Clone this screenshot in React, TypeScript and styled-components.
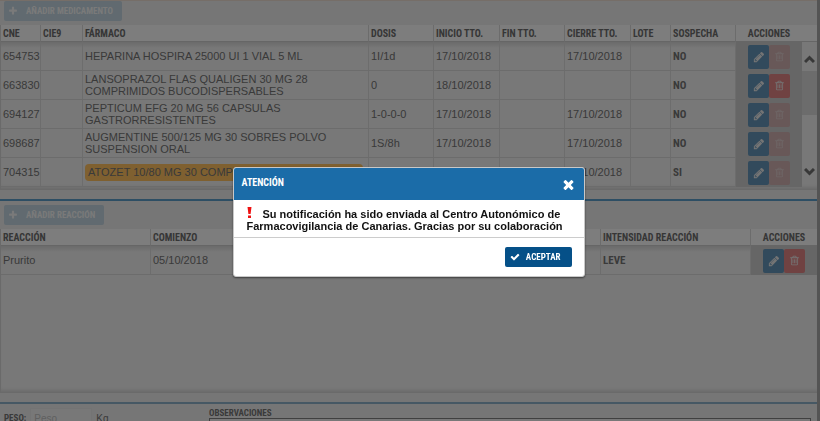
import React from "react";
import styled, { createGlobalStyle, css } from "styled-components";

const condensed = '"Roboto Condensed", "Liberation Sans Narrow", Roboto, sans-serif';
const sans = '"Liberation Sans", Arial, sans-serif';

const GlobalStyle = createGlobalStyle`
  *, *::before, *::after { box-sizing: border-box; }
  body {
    margin: 0;
    overflow: hidden;
    background: #ececec;
    font-family: ${sans};
    font-size: 11px;
    color: #747474;
  }
  button, input, textarea { font: inherit; margin: 0; }
`;

const Page = styled.div`
  display: flex;
  flex-direction: column;
  height: 100vh;
  overflow: hidden;
  border-right: 3px solid #a8a8a8;
  background: #ececec;
`;

const Panel = styled.section<{ $first?: boolean }>`
  flex: none;
  display: flex;
  flex-direction: column;
  padding-bottom: 9px;
  border-top: ${(p) => (p.$first ? "1px solid #ecdcd0" : "2px solid #5a9cc8")};
`;

const Toolbar = styled.div`
  display: flex;
  padding: 0 4px 4px;
`;

const ReactionToolbar = styled(Toolbar)`
  padding-top: 4px;
`;

const Svg = styled.svg<{ $size: number }>`
  display: block;
  flex: none;
  width: ${(p) => p.$size}px;
  height: ${(p) => p.$size}px;
  fill: currentColor;
`;

const AddButton = styled.button`
  display: flex;
  align-items: center;
  gap: 8px;
  height: 20px;
  padding: 0 9px 0 4px;
  border: 0;
  border-radius: 2px;
  background: #c2d4e0;
  color: #f4f4f4;
  font: bold 9px/20px ${condensed};
  white-space: nowrap;
`;

const TableArea = styled.div<{ $height: number }>`
  display: flex;
  align-items: flex-start;
  min-height: ${(p) => p.$height}px;
  border-left: 1px solid #d4d4d4;
  background: #f0f0f0;
  box-shadow: inset 0 -5px 4px -3px #cccccc;
`;

const Grid = styled.table`
  flex: 1;
  width: 100%;
  min-width: 0;
  table-layout: fixed;
  border-collapse: separate;
  border-spacing: 0;
`;

const Col = styled.col<{ $w?: string }>`
  width: ${(p) => p.$w ?? "auto"};
`;

const Th = styled.th<{ $center?: boolean }>`
  height: 17px;
  padding: 2px 2px 0;
  border-right: 1px solid #d8d8d8;
  border-bottom: 1px solid #cccccc;
  background: #fafafa;
  color: #6c6c6c;
  font: bold 10px/14px ${condensed};
  text-align: ${(p) => (p.$center ? "center" : "left")};
  white-space: nowrap;
  &:last-child { border-right: 0; }
`;

const Td = styled.td<{ $strong?: boolean }>`
  height: 29px;
  padding: 0 2px;
  border-right: 1px solid #dadada;
  border-bottom: 1px solid #d8d8d8;
  line-height: 12px;
  vertical-align: middle;
  tr:first-child > & {
    background: linear-gradient(#d6d6d6, #f0f0f0 6px);
  }
  ${(p) => p.$strong && css`
    padding-top: 2px;
    font: bold 11px/12px ${condensed};
  `}
`;

const ActionCell = styled(Td)`
  border: 0;
  &&& { background: #cccccc; }
`;

const Actions = styled.div`
  display: flex;
  justify-content: center;
`;

const IconButton = styled.button<{ $danger?: boolean }>`
  display: grid;
  place-items: center;
  width: 21px;
  height: 24px;
  padding: 0;
  border: 0;
  border-radius: 2px;
  background: ${(p) => (p.$danger ? "#e08484" : "#6494b8")};
  color: #e8e8e8;
  &:disabled { background: #d0b0b0; color: #dccccc; }
`;

const Mark = styled.span`
  display: block;
  margin-right: 3px;
  padding: 0 3px;
  overflow: hidden;
  border-radius: 4px;
  background: #ffc060;
  line-height: 17px;
  white-space: nowrap;
`;

const ScrollColumn = styled.div`
  flex: none;
  align-self: stretch;
  display: flex;
  flex-direction: column;
  width: 15px;
`;

const ScrollHead = styled.div`
  height: 17px;
  border-bottom: 1px solid #cccccc;
  background: #fafafa;
`;

const ScrollButton = styled.button<{ $down?: boolean }>`
  display: grid;
  place-items: center;
  height: 29px;
  padding: ${(p) => (p.$down ? "0 0 6px" : "6px 0 0")};
  border: 0;
  background: none;
  color: #707070;
`;

const ScrollTrack = styled.div`
  flex: 1;
`;

const ScrollThumb = styled.div`
  height: 44px;
  background: #d8d8d8;
`;

const Chevron = styled.svg`
  display: block;
  width: 11px;
  height: 9px;
  fill: none;
  stroke: currentColor;
  stroke-width: 3;
`;

const Form = styled.form`
  display: grid;
  grid-template-columns: 205px 1fr;
  padding: 4px 6px 0 4px;
  border-top: 2px solid #8cb0c8;
`;

const Weight = styled.div`
  display: flex;
  align-items: center;
  height: 20px;
  gap: 4px;
`;

const Label = styled.label`
  font: bold 9px/10px ${condensed};
`;

const WeightInput = styled.input`
  width: 62px;
  height: 20px;
  padding: 0 3px;
  border: 1px solid #e8e8e8;
  background: #f0f0f0;
  font-size: 10px;
  &::placeholder { color: #c0c0c0; opacity: 1; }
`;

const Unit = styled.span`
  font-size: 10px;
`;

const Notes = styled.div`
  display: flex;
  flex-direction: column;
`;

const NotesInput = styled.textarea`
  height: 60px;
  border: 1px solid #808080;
  background: #f0f0f0;
  resize: none;
`;

const Backdrop = styled.div`
  position: fixed;
  inset: 0;
  display: flex;
  align-items: flex-start;
  justify-content: center;
  padding: 167px 3px 0 0;
  background: rgba(0, 0, 0, 0.5);
`;

const Dialog = styled.div`
  width: 352px;
  border: 1px solid #c8c8c8;
  border-radius: 3px;
  overflow: hidden;
  background: #ffffff;
  box-shadow: 0 1px 2px rgba(0, 0, 0, 0.5);
  color: #111111;
`;

const DialogHeader = styled.header`
  display: flex;
  align-items: center;
  justify-content: space-between;
  height: 32px;
  padding: 0 8px;
  background: #1b6ca8;
  color: #ffffff;
`;

const DialogTitle = styled.h2`
  margin: 0;
  padding-bottom: 3px;
  font: bold 10px/12px ${condensed};
`;

const CloseButton = styled.button`
  display: grid;
  place-items: center;
  padding: 1px 0 0;
  border: 0;
  background: none;
  color: #ffffff;
`;

const Message = styled.p`
  margin: 0;
  padding: 7px 13px 5px;
  border-bottom: 1px solid #cccccc;
  font: bold 11px/12px ${sans};
`;

const Alert = styled.svg`
  width: 5px;
  height: 11px;
  margin-right: 11px;
  vertical-align: baseline;
  fill: #ee1111;
`;

const DialogFooter = styled.footer`
  display: flex;
  justify-content: flex-end;
  padding: 9px 12px 9px;
`;

const AcceptButton = styled.button`
  display: flex;
  align-items: center;
  gap: 6px;
  height: 20px;
  padding: 0 11px 0 5px;
  border: 0;
  border-radius: 2px;
  background: #055088;
  color: #ffffff;
  font: bold 9px/20px ${condensed};
`;

const paths = {
  plus: "M1600 736v192q0 40-28 68t-68 28h-416v416q0 40-28 68t-68 28h-192q-40 0-68-28t-28-68v-416h-416q-40 0-68-28t-28-68v-192q0-40 28-68t68-28h416v-416q0-40 28-68t68-28h192q40 0 68 28t28 68v416h416q40 0 68 28t28 68z",
  check: "M1671 566q0 40-28 68l-724 724-136 136q-28 28-68 28t-68-28l-136-136-362-362q-28-28-28-68t28-68l136-136q28-28 68-28t68 28l294 295 656-657q28-28 68-28t68 28l136 136q28 28 28 68z",
  times: "M1490 1322q0 40-28 68l-136 136q-28 28-68 28t-68-28l-294-294-294 294q-28 28-68 28t-68-28l-136-136q-28-28-28-68t28-68l294-294-294-294q-28-28-28-68t28-68l136-136q28-28 68-28t68 28l294 294 294-294q28-28 68-28t68 28l136 136q28 28 28 68t-28 68l-294 294 294 294q28 28 28 68z",
  pencil: "M491 1536l91-91-235-235-91 91v107h128v128h107zm523-928q0-22-22-22-10 0-17 7l-542 542q-7 7-7 17 0 22 22 22 10 0 17-7l542-542q7-7 7-17zm-54-192l416 416-832 832h-416v-416zm683 96q0 53-37 90l-166 166-416-416 166-165q36-38 90-38 53 0 91 38l235 234q37 39 37 91z",
  trash: "M704 736v576q0 14-9 23t-23 9h-64q-14 0-23-9t-9-23v-576q0-14 9-23t23-9h64q14 0 23 9t9 23zm256 0v576q0 14-9 23t-23 9h-64q-14 0-23-9t-9-23v-576q0-14 9-23t23-9h64q14 0 23 9t9 23zm256 0v576q0 14-9 23t-23 9h-64q-14 0-23-9t-9-23v-576q0-14 9-23t23-9h64q14 0 23 9t9 23zm128 724v-948h-896v948q0 22 7 40.5t14.5 27 10.5 8.5h832q3 0 10.5-8.5t14.5-27 7-40.5zm-672-1076h448l-48-117q-7-9-17-11h-317q-10 2-17 11zm928 32v64q0 14-9 23t-23 9h-96v948q0 83-47 143.5t-113 60.5h-832q-66 0-113-58.5t-47-141.5v-952h-96q-14 0-23-9t-9-23v-64q0-14 9-23t23-9h309l70-167q15-37 54-63t79-26h320q40 0 79 26t54 63l70 167h309q14 0 23 9t9 23z",
};

function Icon({ name, size }: { name: keyof typeof paths; size: number }) {
  return (
    <Svg $size={size} viewBox="0 0 1792 1792" aria-hidden="true">
      <path d={paths[name]} />
    </Svg>
  );
}

function RowActions({ removable }: { removable: boolean }) {
  return (
    <Actions>
      <IconButton type="button" aria-label="Editar">
        <Icon name="pencil" size={12} />
      </IconButton>
      <IconButton type="button" aria-label="Eliminar" $danger disabled={!removable}>
        <Icon name="trash" size={11} />
      </IconButton>
    </Actions>
  );
}

interface Drug {
  cne: string;
  name: string;
  dose: string;
  start: string;
  close: string;
  suspect: boolean;
  removable?: boolean;
}

const drugs: Drug[] = [
  { cne: "654753", name: "HEPARINA HOSPIRA 25000 UI 1 VIAL 5 ML", dose: "1I/1d", start: "17/10/2018", close: "17/10/2018", suspect: false },
  { cne: "663830", name: "LANSOPRAZOL FLAS QUALIGEN 30 MG 28 COMPRIMIDOS BUCODISPERSABLES", dose: "0", start: "18/10/2018", close: "", suspect: false, removable: true },
  { cne: "694127", name: "PEPTICUM EFG 20 MG 56 CAPSULAS GASTRORRESISTENTES", dose: "1-0-0-0", start: "17/10/2018", close: "17/10/2018", suspect: false },
  { cne: "698687", name: "AUGMENTINE 500/125 MG 30 SOBRES POLVO SUSPENSION ORAL", dose: "1S/8h", start: "17/10/2018", close: "17/10/2018", suspect: false },
  { cne: "704315", name: "ATOZET 10/80 MG 30 COMPRIMIDOS", dose: "", start: "", close: "17/10/2018", suspect: true },
];

const drugColumns: [string, string?][] = [
  ["CNE", "40px"],
  ["CIE9", "42px"],
  ["FÁRMACO"],
  ["DOSIS", "65px"],
  ["INICIO TTO.", "66px"],
  ["FIN TTO.", "65px"],
  ["CIERRE TTO.", "66px"],
  ["LOTE", "40px"],
  ["SOSPECHA", "65px"],
  ["ACCIONES", "66px"],
];

export default function App() {
  const [open, setOpen] = React.useState(true);
  return (
    <>
      <GlobalStyle />
      <Page>
        <Panel $first>
          <Toolbar>
            <AddButton type="button">
              <Icon name="plus" size={10} />
              AÑADIR MEDICAMENTO
            </AddButton>
          </Toolbar>
          <TableArea $height={165}>
            <Grid>
              <colgroup>
                {drugColumns.map(([title, width]) => <Col key={title} $w={width} />)}
              </colgroup>
              <thead>
                <tr>
                  {drugColumns.map(([title]) => (
                    <Th key={title} $center={title === "ACCIONES"}>{title}</Th>
                  ))}
                </tr>
              </thead>
              <tbody>
                {drugs.map((d) => (
                  <tr key={d.cne}>
                    <Td>{d.cne}</Td>
                    <Td />
                    <Td>{d.suspect ? <Mark>{d.name}</Mark> : d.name}</Td>
                    <Td>{d.dose}</Td>
                    <Td>{d.start}</Td>
                    <Td />
                    <Td>{d.close}</Td>
                    <Td />
                    <Td $strong>{d.suspect ? "SI" : "NO"}</Td>
                    <ActionCell><RowActions removable={!!d.removable} /></ActionCell>
                  </tr>
                ))}
              </tbody>
            </Grid>
            <ScrollColumn>
              <ScrollHead />
              <ScrollButton type="button" aria-label="Subir">
                <Chevron viewBox="0 0 11 9"><path d="M1 7l4.500-4.500L10 7" /></Chevron>
              </ScrollButton>
              <ScrollTrack><ScrollThumb /></ScrollTrack>
              <ScrollButton type="button" aria-label="Bajar" $down>
                <Chevron viewBox="0 0 11 9"><path d="M1 1l4.500 4.500L10 1" /></Chevron>
              </ScrollButton>
            </ScrollColumn>
          </TableArea>
        </Panel>

        <Panel>
          <ReactionToolbar>
            <AddButton type="button">
              <Icon name="plus" size={10} />
              AÑADIR REACCIÓN
            </AddButton>
          </ReactionToolbar>
          <TableArea $height={164}>
            <Grid>
              <colgroup>
                <Col $w="150px" />
                <Col $w="150px" />
                <Col />
                <Col $w="150px" />
                <Col $w="66px" />
              </colgroup>
              <thead>
                <tr>
                  <Th>REACCIÓN</Th>
                  <Th>COMIENZO</Th>
                  <Th />
                  <Th>INTENSIDAD REACCIÓN</Th>
                  <Th $center>ACCIONES</Th>
                </tr>
              </thead>
              <tbody>
                <tr>
                  <Td>Prurito</Td>
                  <Td>05/10/2018</Td>
                  <Td />
                  <Td $strong>LEVE</Td>
                  <ActionCell><RowActions removable /></ActionCell>
                </tr>
              </tbody>
            </Grid>
          </TableArea>
        </Panel>

        <Form>
          <Weight>
            <Label htmlFor="peso">PESO:</Label>
            <WeightInput id="peso" placeholder="Peso" />
            <Unit>Kg</Unit>
          </Weight>
          <Notes>
            <Label htmlFor="observaciones">OBSERVACIONES</Label>
            <NotesInput id="observaciones" />
          </Notes>
        </Form>
      </Page>

      {open && (
        <Backdrop>
          <Dialog role="alertdialog" aria-modal="true" aria-labelledby="aviso-titulo" aria-describedby="aviso-texto">
            <DialogHeader>
              <DialogTitle id="aviso-titulo">ATENCIÓN</DialogTitle>
              <CloseButton type="button" aria-label="Cerrar" onClick={() => setOpen(false)}>
                <Icon name="times" size={15} />
              </CloseButton>
            </DialogHeader>
            <Message id="aviso-texto">
              <Alert viewBox="0 0 5 11" aria-hidden="true">
                <path d="M0.500 0h4L3.600 7H1.400zM1 8.500h3V11H1z" />
              </Alert>
              Su notificación ha sido enviada al Centro Autonómico de Farmacovigilancia de Canarias. Gracias por su colaboración
            </Message>
            <DialogFooter>
              <AcceptButton type="button" onClick={() => setOpen(false)}>
                <Icon name="check" size={10} />
                ACEPTAR
              </AcceptButton>
            </DialogFooter>
          </Dialog>
        </Backdrop>
      )}
    </>
  );
}
